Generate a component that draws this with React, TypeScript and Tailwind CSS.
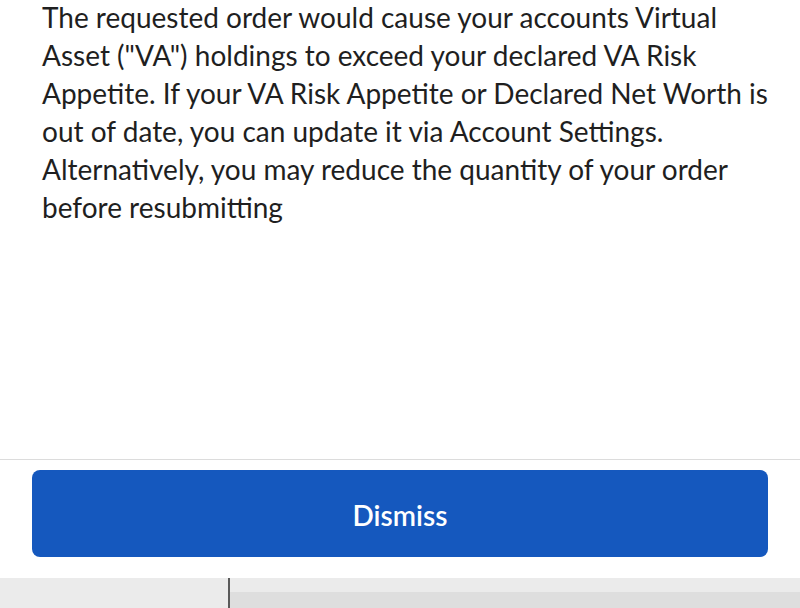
export default function App() {
  return (
    <div
      className="flex h-[608px] w-[800px] flex-col overflow-hidden bg-white"
      style={{ fontFamily: "Lato, 'Noto Sans', sans-serif" }}
    >
      {/* MESSAGE */}
      <div className="flex-1 px-[42px]">
        <p className="-mt-[2px] whitespace-nowrap text-[28px] leading-[38px] text-[#1f1f1f]">
          The requested order would cause your accounts Virtual
          <br />
          Asset ("VA") holdings to exceed your declared VA Risk
          <br />
          Appetite. If your VA Risk Appetite or Declared Net Worth is
          <br />
          out of date, you can update it via Account Settings.
          <br />
          Alternatively, you may reduce the quantity of your order
          <br />
          before resubmitting
        </p>
      </div>

      {/* FOOTER */}
      <div className="border-t border-[#dcdcdc] px-[32px] pt-[10px] pb-[21px]">
        <button className="flex h-[87px] w-full items-center justify-center rounded-[8px] bg-[#1558be] pt-[3px] text-[28px] font-semibold text-white">
          Dismiss
        </button>
      </div>

      {/* BOTTOM BAR */}
      <div className="flex h-[30px] bg-[#ebebeb]">
        <div className="w-[228px]" />
        <div className="w-[2px] bg-[#5a5a5a]" />
        <div className="flex flex-1 flex-col">
          <div className="h-[14px]" />
          <div className="flex-1 bg-[#dedede]" />
        </div>
      </div>
    </div>
  );
}
